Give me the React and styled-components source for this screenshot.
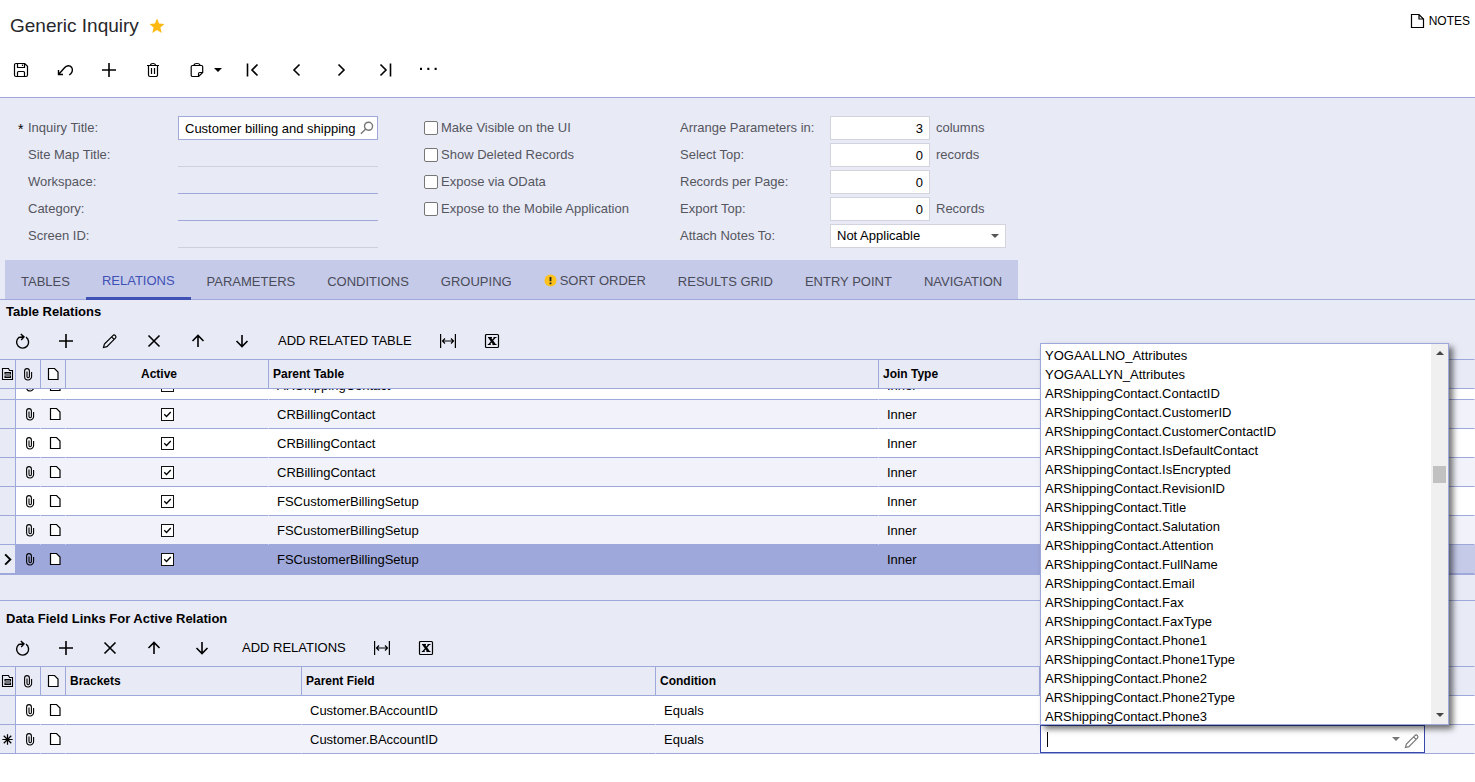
import React, {Fragment} from 'react';
import styled, {createGlobalStyle} from 'styled-components';

const colors = {
    panel: '#e8eaf6',
    tab: '#c5cae9',
    line: '#9fa8da',
    accent: '#3f51b5',
    altRow: '#f2f3fa',
    label: '#55565e',
    border: '#d2d3dc'
}

const GlobalStyle = createGlobalStyle`
    * {
        box-sizing: border-box;
    }
    body {
        margin: 0;
        background-color: #fff;
        color: #000;
        font-family: "Liberation Sans", Arial, sans-serif;
        font-size: 13px;
        overflow: hidden;
    }
    button, input, select {
        font-family: inherit;
        font-size: 13px;
    }
`

const Header = styled.header`
    height: 98px;
    border-bottom: 1px solid ${colors.line};
`
const TitleBar = styled.div`
    display: flex;
    justify-content: space-between;
    padding: 0 5px 0 10px;
`
const TitleGroup = styled.div`
    display: flex;
    align-items: center;
    gap: 10px;
    height: 50px;
    padding-top: 2px;
`
const PageTitle = styled.h1`
    margin: 0;
    font-size: 19px;
    font-weight: normal;
    color: #27272b;
`
const PlainButton = styled.button`
    display: flex;
    align-items: center;
    justify-content: center;
    padding: 0;
    border: none;
    background: none;
    color: #000;
    cursor: pointer;
`
const NotesButton = styled(PlainButton)`
    gap: 4px;
    height: 42px;
    font-size: 12px;
`
const Toolbar = styled.div`
    display: flex;
    align-items: center;
    gap: 8px;
    height: ${props => props.$page ? '40px' : '36px'};
    padding-left: ${props => props.$page ? '3px' : '4px'};
`
const ToolButton = styled(PlainButton)`
    width: ${props => props.$wide ? '44px' : '36px'};
    height: 32px;
`
const MenuButton = styled(PlainButton)`
    width: 48px;
    height: 32px;
    gap: 9px;
    padding-left: 4px;
`
const TextButton = styled(PlainButton)`
    height: 32px;
    padding: 0 10px 2px;
    white-space: nowrap;
`
const Svg = styled.svg`
    display: block;
    flex: none;
    fill: none;
    stroke: ${props => props.$color || '#000'};
    stroke-width: ${props => props.$weight || 1.2};
`

const FormPanel = styled.section`
    display: flex;
    padding: 18px 18px 12px;
    background-color: ${colors.panel};
`
const TitleFields = styled.div`
    flex: 0 0 406px;
`
const CheckFields = styled.div`
    flex: 0 0 256px;
`
const OptionFields = styled.div`
    flex: 1;
`
const Field = styled.div`
    display: flex;
    height: 24px;
    margin-bottom: 3px;
    &:last-child {
        margin-bottom: 0;
    }
`
const Required = styled.span`
    width: 10px;
    line-height: 26px;
    font-size: 14px;
`
const FieldLabel = styled.label`
    flex: 0 0 150px;
    line-height: 23px;
    color: ${colors.label};
`
const LookupBox = styled.div`
    display: flex;
    align-items: center;
    width: 200px;
    padding-right: 3px;
    border: 1px solid ${colors.line};
    background-color: #fff;
`
const LookupInput = styled.input`
    flex: 1;
    min-width: 0;
    height: 22px;
    padding: 1px 0 0 6px;
    border: none;
    outline: none;
    background: none;
`
const LineInput = styled.input`
    width: 200px;
    border: none;
    outline: none;
    background: none;
    border-bottom: 1px solid ${props => props.$active ? colors.line : '#cfd0dc'};
`
const CheckLabel = styled.label`
    display: flex;
    gap: 3px;
    line-height: 23px;
    color: ${colors.label};
`
const CheckInput = styled.input`
    appearance: none;
    width: 14px;
    height: 14px;
    margin: 5px 0 0;
    border: 1px solid #767676;
    border-radius: 2px;
    background-color: #fff;
`
const NumberInput = styled.input`
    width: 100px;
    padding: 1px 6px 0;
    border: 1px solid ${colors.border};
    outline: none;
    text-align: right;
`
const Suffix = styled.span`
    margin-left: 6px;
    line-height: 23px;
    color: ${colors.label};
`
const SelectBox = styled.div`
    position: relative;
    width: 176px;
`
const Select = styled.select`
    appearance: none;
    width: 100%;
    height: 24px;
    padding: 0 6px 2px;
    border: 1px solid ${colors.border};
    border-radius: 0;
    background-color: #fff;
    color: #000;
`
const Caret = styled.span`
    flex: none;
    border: 4px solid transparent;
    border-top-color: ${props => props.$color || '#000'};
    border-bottom: none;
`
const SelectCaret = styled(Caret)`
    position: absolute;
    top: 10px;
    right: 7px;
    pointer-events: none;
`

const TabStrip = styled.div`
    display: flex;
    padding-left: 5px;
    background-color: ${colors.panel};
    border-bottom: 1px solid ${colors.line};
`
const TabList = styled.div`
    display: flex;
    height: 39px;
    background-color: ${colors.tab};
`
const Tab = styled(PlainButton)`
    gap: 3px;
    height: 40px;
    padding: ${props => props.$warning ? '0 16px' : props.$active ? '3px 16px 0' : '3px 16px 1px'};
    border-bottom: ${props => props.$active ? `3px solid ${colors.accent}` : 'none'};
    color: ${props => props.$active ? colors.accent : '#4a4b57'};
    white-space: nowrap;
`

const GridPanel = styled.section`
    background-color: ${colors.panel};
    padding-top: ${props => props.$spaced ? '6px' : '0'};
    padding-bottom: ${props => props.$spaced ? '0' : '25px'};
    border-bottom: ${props => props.$spaced ? 'none' : `1px solid ${colors.line}`};
`
const GridTitle = styled.h2`
    margin: 0;
    padding-left: 6px;
    font-size: 13px;
    line-height: 23px;
`
const GridScroll = styled.div`
    height: 186px;
    overflow: hidden;
`
const Table = styled.table`
    width: 100%;
    table-layout: fixed;
    border-collapse: separate;
    border-spacing: 0;
`
const HeadCell = styled.th`
    height: 30px;
    padding: ${props => props.$center ? '0 16px 0 0' : '0 4px'};
    border-top: 1px solid ${colors.line};
    border-bottom: 1px solid ${colors.line};
    border-right: 1px solid ${props => props.$last ? 'transparent' : colors.line};
    background-color: ${colors.panel};
    font-size: 12px;
    text-align: ${props => props.$center ? 'center' : 'left'};
`
const IconHeadCell = styled(HeadCell)`
    padding: 0;
`
const Row = styled.tr`
    background-color: ${props => props.$selected ? colors.line : props.$alt ? colors.altRow : '#fff'};
`
const Cell = styled.td`
    height: ${props => props.$selected ? '30px' : '29px'};
    padding: 0 8px;
    border-right: 1px solid transparent;
    border-bottom: ${props => props.$selected ? '2px' : '1px'} solid ${colors.line};
    background-color: ${props => props.$pale ? colors.tab : 'transparent'};
`
const IconCell = styled(Cell)`
    padding: 0 0 0 4px;
`
const MarkCell = styled(Cell)`
    padding: 0;
    border-right-color: ${colors.line};
    background-color: ${colors.panel};
`
const Centered = styled.div`
    display: flex;
    justify-content: center;
`
const CheckBox = styled.span`
    display: grid;
    place-items: center;
    > * {
        grid-area: 1 / 1;
    }
`
const RowCheck = styled.input`
    appearance: none;
    width: 13px;
    height: 13px;
    margin: 0;
    border: 1px solid #111;
    background-color: #fff;
    &:not(:checked) + svg {
        visibility: hidden;
    }
    & + svg {
        pointer-events: none;
        z-index: 0;
    }
`

const EditCell = styled(Cell)`
    position: relative;
    padding: 0;
    border-right: none;
`
const Combo = styled.div`
    display: flex;
    align-items: center;
    height: 28px;
    padding: 0 4px 0 6px;
    border: 1px solid #3949ab;
    background-color: #fff;
`
const TextCursor = styled.span`
    width: 1px;
    height: 15px;
    background-color: #000;
`
const ComboInput = styled.input`
    flex: 1;
    min-width: 0;
    border: none;
    outline: none;
    background: none;
`
const ComboEdit = styled(PlainButton)`
    margin-left: 4px;
    padding-top: 3px;
`
const Popup = styled.div`
    position: absolute;
    z-index: 2;
    left: 0;
    bottom: 100%;
    display: flex;
    width: 409px;
    height: 382px;
    border: 1px solid ${colors.line};
    background-color: #fff;
    box-shadow: 4px 4px 6px rgba(0, 0, 0, 0.55);
`
const OptionList = styled.ul`
    flex: 1;
    margin: 0;
    padding: 2px 0 0 4px;
    overflow: hidden;
    list-style: none;
`
const Option = styled.li`
    line-height: 19px;
    white-space: nowrap;
`
const ScrollTrack = styled.div`
    display: flex;
    flex-direction: column;
    align-items: center;
    justify-content: space-between;
    width: 17px;
    padding: 7px 0;
    background-color: #f0f0f0;
`
const ScrollArrow = styled(Caret)`
    border-top-color: #444;
    transform: ${props => props.$up ? 'rotate(180deg)' : 'none'};
`
const ScrollThumb = styled.div`
    width: 13px;
    height: 17px;
    margin-bottom: 120px;
    background-color: #c1c1c1;
`

const Icon = ({name, size = 16, color, weight}) => (
    <Svg width={size} height={size} viewBox="0 0 16 16" $color={color} $weight={weight} aria-hidden="true">
        {icons[name]}
    </Svg>
)

const StarIcon = () => (
    <svg width="16" height="16" viewBox="0 0 16 16" aria-hidden="true">
        <path fill="#fbb911" d="M8 .5l2.100 5.100 5.400.4-4.100 3.500 1.300 5.400L8 12l-4.700 2.900 1.300-5.400L.5 6l5.400-.4z"/>
    </svg>
)

const WarningIcon = () => (
    <svg width="13" height="13" viewBox="0 0 13 13" aria-hidden="true">
        <circle cx="6.500" cy="6.500" r="6" fill="#fcc21b"/>
        <path d="M6.500 3v4.200M6.500 8.600v1.600" stroke="#222" strokeWidth="1.800"/>
    </svg>
)

const GridColumns = ({columns}) => (
    <colgroup>
        <col width="16"/>
        <col width="25"/>
        <col width="25"/>
        {columns.map((column, index) => <col key={index} width={column.width}/>)}
    </colgroup>
)

const GridHead = ({columns}) => (
    <thead>
        <tr>
            <IconHeadCell aria-label="Row settings"><Icon name="rows"/></IconHeadCell>
            <IconHeadCell aria-label="Files"><Centered><Icon name="clip"/></Centered></IconHeadCell>
            <IconHeadCell aria-label="Notes"><Centered><Icon name="page"/></Centered></IconHeadCell>
            {columns.map((column, index) => (
                <HeadCell key={index} $center={column.center}
                          $last={index === columns.length - 1}>{column.name}</HeadCell>
            ))}
        </tr>
    </thead>
)

const RowIcons = ({mark, selected}) => (
    <Fragment>
        <MarkCell $selected={selected}>{mark && <Icon name={mark} size={15} weight={2}/>}</MarkCell>
        <IconCell $selected={selected}><Centered><Icon name="clip"/></Centered></IconCell>
        <IconCell $selected={selected}><Centered><Icon name="page"/></Centered></IconCell>
    </Fragment>
)

export default class GenericInquiry extends React.Component {

    state = {
        title: 'Customer billing and shipping',
        field: ''
    }

    relations = React.createRef()

    componentDidMount() {
        this.relations.current.scrollTop = 18
    }

    handleChange = (event) => {
        this.setState({[event.target.name]: event.target.value})
    }

    render() {
        return (
            <Fragment>
                <GlobalStyle/>
                <Header>
                    <TitleBar>
                        <TitleGroup>
                            <PageTitle>Generic Inquiry</PageTitle>
                            <PlainButton aria-label="Favorite"><StarIcon/></PlainButton>
                        </TitleGroup>
                        <NotesButton><Icon name="note"/>NOTES</NotesButton>
                    </TitleBar>
                    <Toolbar $page>
                        <ToolButton aria-label="Save"><Icon name="save"/></ToolButton>
                        <ToolButton aria-label="Undo"><Icon name="undo" weight={1.4}/></ToolButton>
                        <ToolButton aria-label="Add"><Icon name="plus" weight={1.6}/></ToolButton>
                        <ToolButton aria-label="Delete"><Icon name="trash"/></ToolButton>
                        <MenuButton aria-label="Clipboard"><Icon name="paste"/><Caret/></MenuButton>
                        <ToolButton aria-label="First"><Icon name="first" weight={1.6}/></ToolButton>
                        <ToolButton aria-label="Previous"><Icon name="prev" weight={1.6}/></ToolButton>
                        <ToolButton aria-label="Next"><Icon name="next" weight={1.6}/></ToolButton>
                        <ToolButton aria-label="Last"><Icon name="last" weight={1.6}/></ToolButton>
                        <ToolButton aria-label="More"><Icon name="more" size={18}/></ToolButton>
                    </Toolbar>
                </Header>
                <FormPanel>
                    <TitleFields>
                        <Field>
                            <Required>*</Required>
                            <FieldLabel htmlFor="title">Inquiry Title:</FieldLabel>
                            <LookupBox>
                                <LookupInput id="title" name="title" value={this.state.title}
                                             onChange={this.handleChange}/>
                                <PlainButton aria-label="Search"><Icon name="search" size={14} color="#777"/></PlainButton>
                            </LookupBox>
                        </Field>
                        {titleFields.map((field) => (
                            <Field key={field.id}>
                                <Required/>
                                <FieldLabel htmlFor={field.id}>{field.name}</FieldLabel>
                                <LineInput id={field.id} $active={field.active}/>
                            </Field>
                        ))}
                    </TitleFields>
                    <CheckFields>
                        {checks.map((name) => (
                            <Field key={name}>
                                <CheckLabel><CheckInput type="checkbox"/>{name}</CheckLabel>
                            </Field>
                        ))}
                    </CheckFields>
                    <OptionFields>
                        {options.map((option) => (
                            <Field key={option.id}>
                                <FieldLabel htmlFor={option.id}>{option.name}</FieldLabel>
                                <NumberInput id={option.id} defaultValue={option.value}/>
                                <Suffix>{option.suffix}</Suffix>
                            </Field>
                        ))}
                        <Field>
                            <FieldLabel htmlFor="attach">Attach Notes To:</FieldLabel>
                            <SelectBox>
                                <Select id="attach"><option>Not Applicable</option></Select>
                                <SelectCaret $color="#555"/>
                            </SelectBox>
                        </Field>
                    </OptionFields>
                </FormPanel>
                <TabStrip>
                    <TabList role="tablist">
                        {tabs.map((tab) => (
                            <Tab key={tab.name} role="tab" $active={tab.active} $warning={tab.warning}
                                 aria-selected={!!tab.active}>
                                {tab.warning && <WarningIcon/>}{tab.name}
                            </Tab>
                        ))}
                    </TabList>
                </TabStrip>
                <GridPanel>
                    <GridTitle>Table Relations</GridTitle>
                    <Toolbar>
                        <ToolButton aria-label="Refresh"><Icon name="refresh" weight={1.4}/></ToolButton>
                        <ToolButton aria-label="Add row"><Icon name="plus" weight={1.6}/></ToolButton>
                        <ToolButton aria-label="Edit row"><Icon name="pencil"/></ToolButton>
                        <ToolButton aria-label="Delete row"><Icon name="cross" weight={1.6}/></ToolButton>
                        <ToolButton aria-label="Row up"><Icon name="up" weight={1.6}/></ToolButton>
                        <ToolButton aria-label="Row down"><Icon name="down" weight={1.6}/></ToolButton>
                        <TextButton>ADD RELATED TABLE</TextButton>
                        <ToolButton aria-label="Fit to screen"><Icon name="fit"/></ToolButton>
                        <ToolButton aria-label="Export to Excel"><Icon name="excel"/></ToolButton>
                    </Toolbar>
                    <Table>
                        <GridColumns columns={relationColumns}/>
                        <GridHead columns={relationColumns}/>
                    </Table>
                    <GridScroll ref={this.relations}>
                        <Table aria-label="Table Relations">
                            <GridColumns columns={relationColumns}/>
                            <tbody>
                                {relations.map((name, index) => {
                                    const selected = index === relations.length - 1
                                    return (
                                        <Row key={index} $alt={index % 2 === 1} $selected={selected}>
                                            <RowIcons mark={selected && 'next'} selected={selected}/>
                                            <Cell $selected={selected}>
                                                <Centered>
                                                    <CheckBox>
                                                        <RowCheck type="checkbox" defaultChecked aria-label="Active"/>
                                                        <Icon name="check" size={13} weight={1.6}/>
                                                    </CheckBox>
                                                </Centered>
                                            </Cell>
                                            <Cell $selected={selected}>{name}</Cell>
                                            <Cell $selected={selected}>Inner</Cell>
                                            <Cell $selected={selected} $pale={selected}/>
                                        </Row>
                                    )
                                })}
                            </tbody>
                        </Table>
                    </GridScroll>
                </GridPanel>
                <GridPanel $spaced>
                    <GridTitle>Data Field Links For Active Relation</GridTitle>
                    <Toolbar>
                        <ToolButton aria-label="Refresh"><Icon name="refresh" weight={1.4}/></ToolButton>
                        <ToolButton aria-label="Add row"><Icon name="plus" weight={1.6}/></ToolButton>
                        <ToolButton aria-label="Delete row"><Icon name="cross" weight={1.6}/></ToolButton>
                        <ToolButton aria-label="Row up"><Icon name="up" weight={1.6}/></ToolButton>
                        <ToolButton $wide aria-label="Row down"><Icon name="down" weight={1.6}/></ToolButton>
                        <TextButton>ADD RELATIONS</TextButton>
                        <ToolButton aria-label="Fit to screen"><Icon name="fit"/></ToolButton>
                        <ToolButton aria-label="Export to Excel"><Icon name="excel"/></ToolButton>
                    </Toolbar>
                    <Table>
                        <GridColumns columns={linkColumns}/>
                        <GridHead columns={linkColumns}/>
                        <tbody>
                            <Row>
                                <RowIcons/>
                                <Cell/>
                                <Cell>Customer.BAccountID</Cell>
                                <Cell>Equals</Cell>
                                <Cell/>
                                <Cell/>
                            </Row>
                            <Row $alt>
                                <RowIcons mark="asterisk"/>
                                <Cell/>
                                <Cell>Customer.BAccountID</Cell>
                                <Cell>Equals</Cell>
                                <EditCell>
                                    <Combo>
                                        <TextCursor/>
                                        <ComboInput name="field" aria-label="Child Field" value={this.state.field}
                                                    onChange={this.handleChange}/>
                                        <Caret $color="#777"/>
                                        <ComboEdit aria-label="Edit field"><Icon name="pencil" color="#777"/></ComboEdit>
                                    </Combo>
                                    <Popup>
                                        <OptionList role="listbox" aria-label="Fields">
                                            {fields.map((field) => (
                                                <Option key={field} role="option">{field}</Option>
                                            ))}
                                        </OptionList>
                                        <ScrollTrack>
                                            <ScrollArrow $up/>
                                            <ScrollThumb/>
                                            <ScrollArrow/>
                                        </ScrollTrack>
                                    </Popup>
                                </EditCell>
                                <Cell/>
                            </Row>
                        </tbody>
                    </Table>
                </GridPanel>
            </Fragment>
        )
    }
}

const icons = {
    save: <path d="M1.500 3a1.500 1.500 0 0 1 1.500-1.500h8.700l2.800 2.800V13a1.500 1.500 0 0 1-1.500 1.500H3A1.500 1.500 0 0 1 1.500 13zM4.500 1.500v4h7v-4M9.500 2.500v1.500M4.500 14.500v-4a1 1 0 0 1 1-1h5a1 1 0 0 1 1 1v4"/>,
    undo: <path d="M1.500 8v4.500H6M1.800 12.200L7.500 5.800C9.500 3.200 13 3 14.700 5.500c1.300 2.300.5 4.500-.7 6L12.300 13"/>,
    plus: <path d="M8 1v14M1 8h14"/>,
    trash: <path d="M2 3.500h12M5.500 3.500c0-1.500.8-2 2.500-2s2.500.5 2.500 2M3.500 3.500V13A1.500 1.500 0 0 0 5 14.500h6a1.500 1.500 0 0 0 1.500-1.500V3.500M6.500 6v6M9.500 6v6"/>,
    paste: <path d="M5 3.500H3.500A1.300 1.300 0 0 0 2.200 4.800v8.400a1.300 1.300 0 0 0 1.300 1.300h6.200l4-4V4.800a1.300 1.300 0 0 0-1.300-1.300H11M5 3.500c0-1.500.9-2 3-2s3 .5 3 2zM9.500 14.500v-2.800a1.200 1.200 0 0 1 1.200-1.200h3"/>,
    first: <path d="M2.500 1.500v13M12.500 2.500L7 8l5.500 5.500"/>,
    prev: <path d="M10.500 2.500L5 8l5.500 5.500"/>,
    next: <path d="M5.500 2.500L11 8l-5.500 5.500"/>,
    last: <path d="M13.500 1.500v13M3.500 2.500L9 8l-5.500 5.500"/>,
    more: <path d="M0 7h1.800M6.500 7h1.800M13 7h1.800" strokeWidth="1.800"/>,
    note: <path d="M2.500 1.500h7.500l4.500 4.500v8.500h-12zM10 1.500v4.500h4.500"/>,
    page: <path d="M3.500 2.500h6l3.500 3.500v7.500H3.500z" fill="#fff"/>,
    clip: <path d="M9.400 5v5.500a1.200 1.200 0 0 1-2.400 0V5.500M9.400 5a2.400 2.400 0 0 0-4.800 0v5.500a3.500 3.500 0 0 0 7 0V6" strokeWidth="1.100"/>,
    check: <path d="M4 7.800l2.800 2.700L12 5"/>,
    rows: <path d="M2.500 13.500v-11h6l1 2h3v9zM5 6.500h5.500v1.500H5zM5 10h5.500v1.500H5z" strokeWidth="1.100"/>,
    search: <path d="M9.800 1.400a4.600 4.600 0 1 1-.1 9.200 4.600 4.600 0 0 1 .1-9.200M6.300 9.300L1 14.500" strokeWidth="1.600"/>,
    refresh: <path d="M12 4.200A6 6 0 1 1 4.800 4.500L10 3.800M6.800 1L10 3.900 7.200 7"/>,
    pencil: <path d="M1.500 14.500l.9-3.400L10.900 2.600a1.700 1.700 0 0 1 2.500 2.500L4.900 13.600zM9.600 3.900l2.500 2.500"/>,
    cross: <path d="M2.500 2.500l11 11M13.500 2.500l-11 11"/>,
    up: <path d="M8 14V2.500M2.500 8L8 2.500 13.500 8"/>,
    down: <path d="M8 2v11.500M2.500 8L8 13.500 13.500 8"/>,
    fit: <path d="M.6 1v14M15.400 1v14M2.500 8h11M5 5.500L2.500 8 5 10.500M11 5.500L13.500 8 11 10.500"/>,
    excel: (
        <Fragment>
            <rect x="1.500" y="1.500" width="13" height="13" rx="1"/>
            <path d="M5.500 4.500l5 7" strokeWidth="2.400"/>
            <path d="M11 4.500l-6 7M4 4.500h4M9.500 4.500h3M3.800 11.500h3M8.500 11.500h4"/>
        </Fragment>
    ),
    asterisk: <path d="M8 2.500v11M2.500 8h11M4 4l8 8M12 4l-8 8" strokeWidth="1.300"/>
}

const titleFields = [
    {id: 'siteMap', name: 'Site Map Title:'},
    {id: 'workspace', name: 'Workspace:', active: true},
    {id: 'category', name: 'Category:', active: true},
    {id: 'screen', name: 'Screen ID:'}
]

const checks = [
    'Make Visible on the UI',
    'Show Deleted Records',
    'Expose via OData',
    'Expose to the Mobile Application'
]

const options = [
    {id: 'arrange', name: 'Arrange Parameters in:', value: '3', suffix: 'columns'},
    {id: 'selectTop', name: 'Select Top:', value: '0', suffix: 'records'},
    {id: 'perPage', name: 'Records per Page:', value: '0', suffix: ''},
    {id: 'exportTop', name: 'Export Top:', value: '0', suffix: 'Records'}
]

const tabs = [
    {name: 'TABLES'},
    {name: 'RELATIONS', active: true},
    {name: 'PARAMETERS'},
    {name: 'CONDITIONS'},
    {name: 'GROUPING'},
    {name: 'SORT ORDER', warning: true},
    {name: 'RESULTS GRID'},
    {name: 'ENTRY POINT'},
    {name: 'NAVIGATION'}
]

const relationColumns = [
    {name: 'Active', width: 203, center: true},
    {name: 'Parent Table', width: 610},
    {name: 'Join Type', width: 546},
    {name: ''}
]

const linkColumns = [
    {name: 'Brackets', width: 236},
    {name: 'Parent Field', width: 354},
    {name: 'Condition', width: 384},
    {name: '', width: 385},
    {name: ''}
]

const relations = [
    'ARShippingContact',
    'CRBillingContact',
    'CRBillingContact',
    'CRBillingContact',
    'FSCustomerBillingSetup',
    'FSCustomerBillingSetup',
    'FSCustomerBillingSetup'
]

const fields = [
    'YOGAALLNO_Attributes',
    'YOGAALLYN_Attributes',
    'ARShippingContact.ContactID',
    'ARShippingContact.CustomerID',
    'ARShippingContact.CustomerContactID',
    'ARShippingContact.IsDefaultContact',
    'ARShippingContact.IsEncrypted',
    'ARShippingContact.RevisionID',
    'ARShippingContact.Title',
    'ARShippingContact.Salutation',
    'ARShippingContact.Attention',
    'ARShippingContact.FullName',
    'ARShippingContact.Email',
    'ARShippingContact.Fax',
    'ARShippingContact.FaxType',
    'ARShippingContact.Phone1',
    'ARShippingContact.Phone1Type',
    'ARShippingContact.Phone2',
    'ARShippingContact.Phone2Type',
    'ARShippingContact.Phone3'
]
